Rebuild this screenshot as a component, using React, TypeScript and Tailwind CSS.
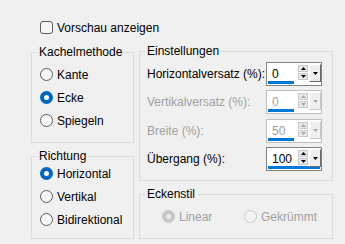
import React from "react";

type RadioProps = { label: string; checked?: boolean; disabled?: boolean };

function Radio({ label, checked, disabled }: RadioProps) {
  let dot = "border border-[#5d5d5d] bg-[#f7f7f7]";
  if (checked && !disabled) dot = "bg-[#0067c0]";
  if (checked && disabled) dot = "bg-[#c6c6c6]";
  if (!checked && disabled) dot = "border border-[#c8c8c8] bg-[#f3f3f3]";
  return (
    <div className="flex items-center gap-[4px] h-[23px]">
      <span className={`w-[13px] h-[13px] rounded-full flex items-center justify-center ${dot}`}>
        {checked && (
          <span className={`w-[5px] h-[5px] rounded-full ${disabled ? "bg-[#ececec]" : "bg-white"}`} />
        )}
      </span>
      <span className={disabled ? "text-[#a0a0a0]" : "text-black"}>{label}</span>
    </div>
  );
}

function GroupBox({
  title,
  className,
  children,
}: {
  title: string;
  className: string;
  children?: React.ReactNode;
}) {
  return (
    <div className={`relative border border-[#dcdcdc] ${className}`}>
      <span className="absolute left-[5px] top-[-8px] px-[2px] bg-[#f0f0f0] leading-[14px] text-black">
        {title}
      </span>
      {children}
    </div>
  );
}

function Tri({ up, color }: { up?: boolean; color: string }) {
  return (
    <svg width="5" height="3" viewBox="0 0 5 3">
      <polygon points={up ? "2.5,0 5,3 0,3" : "0,0 5,0 2.5,3"} fill={color} />
    </svg>
  );
}

function Spin({ value, disabled, full }: { value: string; disabled?: boolean; full?: boolean }) {
  const tri = disabled ? "#a8a8a8" : "#000";
  return (
    <div
      className={`relative w-[56px] h-[24px] border bg-white ${
        disabled ? "border-[#bfbfbf]" : "border-[#828282]"
      }`}
    >
      <span
        className={`absolute left-[5px] top-[4px] leading-[14px] text-[12px] ${
          disabled ? "text-[#a0a0a0]" : "text-black"
        }`}
      >
        {value}
      </span>
      <div
        className={`absolute left-[1px] bottom-[1px] h-[3px] bg-[#0078d7] ${
          full ? "w-[52px]" : "w-[26px]"
        }`}
      />
      <div className="absolute left-[31px] top-[2px] flex flex-col gap-[1px]">
        <div className="w-[10px] h-[7px] border border-[#c9c9c9] bg-[#e8e8e8] flex items-center justify-center">
          <Tri up color={tri} />
        </div>
        <div className="w-[10px] h-[7px] border border-[#c9c9c9] bg-[#e8e8e8] flex items-center justify-center">
          <Tri color={tri} />
        </div>
      </div>
      <div
        className={`absolute left-[42px] top-[1px] w-[12px] h-[18px] bg-[#efefef] border-t border-l border-t-white border-l-white border-r border-b flex items-center justify-center ${
          disabled ? "border-r-[#c8c8c8] border-b-[#c8c8c8]" : "border-r-[#6a6a6a] border-b-[#6a6a6a]"
        }`}
      >
        <Tri color={tri} />
      </div>
    </div>
  );
}

function SpinRow({
  label,
  value,
  disabled,
  full,
  className = "",
}: {
  label: string;
  value: string;
  disabled?: boolean;
  full?: boolean;
  className?: string;
}) {
  return (
    <div className={`flex items-center justify-between pr-[10px] ${className}`}>
      <span className={`whitespace-nowrap ${disabled ? "text-[#a0a0a0]" : "text-black"}`}>{label}</span>
      <Spin value={value} disabled={disabled} full={full} />
    </div>
  );
}

export default function App() {
  return (
    <div className="w-[345px] h-[244px] bg-[#f0f0f0] font-['Liberation_Sans',Arial,sans-serif] text-[12px] leading-[16px] overflow-hidden">
      <div className="mt-[21px] ml-[40px] flex items-center gap-[4px] h-[13px]">
        <span className="w-[13px] h-[13px] rounded-[3px] border border-[#5d5d5d] bg-[#f7f7f7]" />
        <span className="text-black">Vorschau anzeigen</span>
      </div>

      <div className="flex items-start ml-[31px]">
        <div className="w-[103px] mt-[18px] flex flex-col">
          <GroupBox title="Kachelmethode" className="h-[91px] pt-[10px] pl-[8px]">
            <Radio label="Kante" />
            <Radio label="Ecke" checked />
            <Radio label="Spiegeln" />
          </GroupBox>
          <GroupBox title="Richtung" className="mt-[13px] h-[83px] pt-[5px] pl-[8px]">
            <Radio label="Horizontal" checked />
            <Radio label="Vertikal" />
            <Radio label="Bidirektional" />
          </GroupBox>
        </div>

        <div className="w-[194px] ml-[5px] mt-[17px] flex flex-col">
          <GroupBox title="Einstellungen" className="h-[130px] pt-[10px] pl-[7px]">
            <SpinRow label="Horizontalversatz (%):" value="0" />
            <SpinRow label="Vertikalversatz (%):" value="0" disabled className="mt-[4px]" />
            <SpinRow label="Breite (%):" value="50" disabled className="mt-[5px]" />
            <SpinRow label="Übergang (%):" value="100" full className="mt-[4px]" />
          </GroupBox>
          <GroupBox title="Eckenstil" className="mt-[13px] h-[45px] pt-[10px] pl-[22px]">
            <div className="flex">
              <div className="w-[82px]">
                <Radio label="Linear" checked disabled />
              </div>
              <Radio label="Gekrümmt" disabled />
            </div>
          </GroupBox>
        </div>
      </div>
    </div>
  );
}
